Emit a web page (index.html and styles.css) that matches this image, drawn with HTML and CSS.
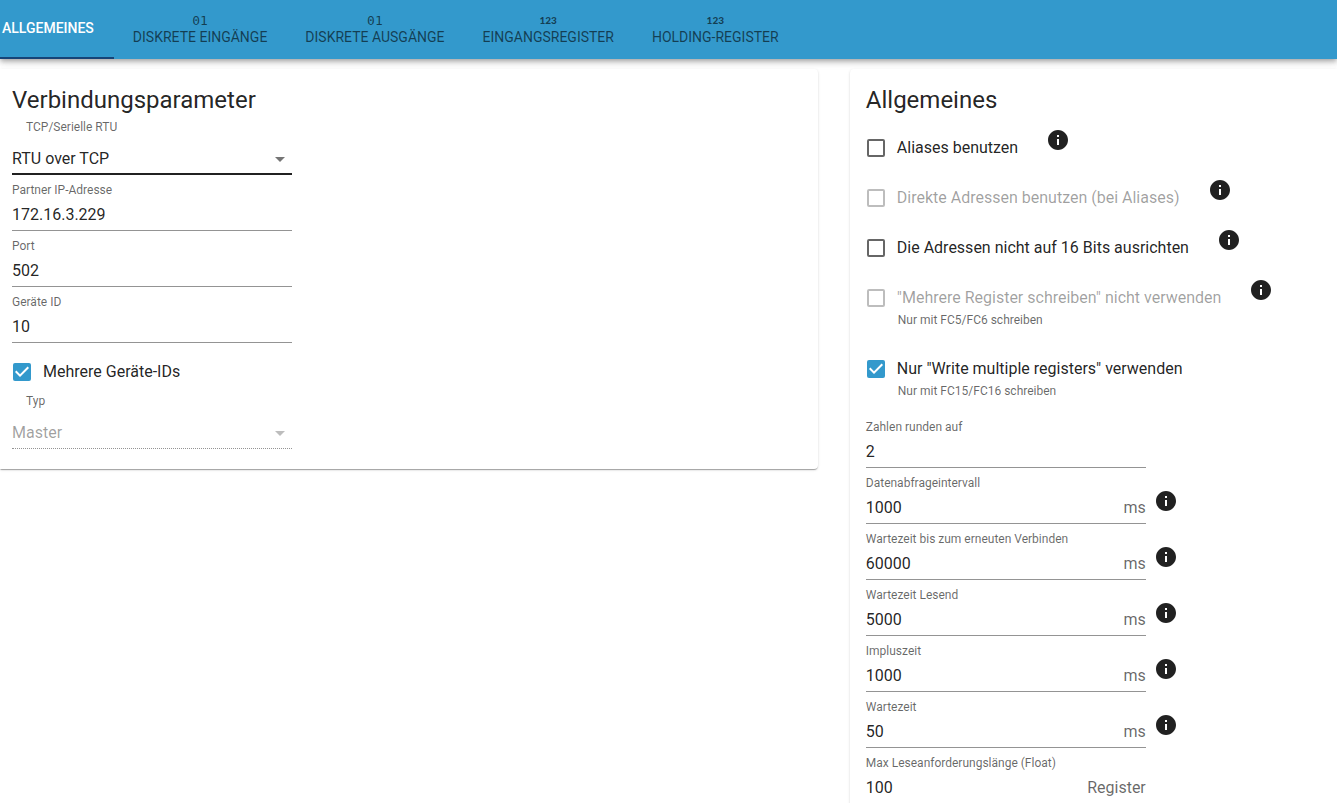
FILE: index.html
```html
<!DOCTYPE html>
<html lang="de">
<head>
    <meta charset="UTF-8">
    <meta name="viewport" content="width=device-width, initial-scale=1.0">
    <title>Modbus</title>
    <link rel="stylesheet" href="styles.css">
</head>
<body>
    <svg width="0" height="0" class="sprite" aria-hidden="true">
        <symbol id="info" viewBox="0 0 24 24">
            <path d="M12 2C6.48 2 2 6.48 2 12s4.48 10 10 10 10-4.48 10-10S17.52 2 12 2zm1 15h-2v-6h2v6zm0-8h-2V7h2v2z"></path>
        </symbol>
        <symbol id="arrow" viewBox="0 0 24 24">
            <path d="M7 10l5 5 5-5z"></path>
        </symbol>
    </svg>

    <nav class="tabs" role="tablist">
        <button class="tab active" type="button" role="tab" aria-selected="true">ALLGEMEINES</button>
        <button class="tab" type="button" role="tab"><span class="tab-icon binary">01</span>DISKRETE EINGÄNGE</button>
        <button class="tab" type="button" role="tab"><span class="tab-icon binary">01</span>DISKRETE AUSGÄNGE</button>
        <button class="tab" type="button" role="tab"><span class="tab-icon digits">123</span>EINGANGSREGISTER</button>
        <button class="tab" type="button" role="tab"><span class="tab-icon digits">123</span>HOLDING-REGISTER</button>
    </nav>

    <main class="content">
        <!-- Verbindungsparameter -->
        <section class="card connection">
            <h2 class="card-title">Verbindungsparameter</h2>
            <div class="select-field focused">
                <label for="type">TCP/Serielle RTU</label>
                <div class="select-box">
                    <select id="type">
                        <option>TCP</option>
                        <option selected>RTU over TCP</option>
                        <option>Seriell</option>
                    </select>
                    <svg class="icon"><use href="#arrow"></use></svg>
                </div>
            </div>
            <div class="field">
                <label for="ip">Partner IP-Adresse</label>
                <div class="input-box"><input id="ip" type="text" value="172.16.3.229"></div>
            </div>
            <div class="field">
                <label for="port">Port</label>
                <div class="input-box"><input id="port" type="text" value="502"></div>
            </div>
            <div class="field">
                <label for="device">Geräte ID</label>
                <div class="input-box"><input id="device" type="text" value="10"></div>
            </div>
            <div class="check-row">
                <div class="check-main">
                    <label class="check"><input type="checkbox" checked>Mehrere Geräte-IDs</label>
                </div>
            </div>
            <div class="select-field">
                <label for="role">Typ</label>
                <div class="select-box">
                    <select id="role" disabled>
                        <option>Master</option>
                        <option>Slave</option>
                    </select>
                    <svg class="icon"><use href="#arrow"></use></svg>
                </div>
            </div>
        </section>

        <!-- Allgemeines -->
        <section class="card general">
            <h2 class="card-title">Allgemeines</h2>
            <div class="options">
                <div class="check-row">
                    <div class="check-main">
                        <label class="check"><input type="checkbox">Aliases benutzen</label>
                        <svg class="icon info"><use href="#info"></use></svg>
                    </div>
                </div>
                <div class="check-row">
                    <div class="check-main">
                        <label class="check disabled"><input type="checkbox" disabled>Direkte Adressen benutzen (bei Aliases)</label>
                        <svg class="icon info"><use href="#info"></use></svg>
                    </div>
                </div>
                <div class="check-row">
                    <div class="check-main">
                        <label class="check"><input type="checkbox">Die Adressen nicht auf 16 Bits ausrichten</label>
                        <svg class="icon info"><use href="#info"></use></svg>
                    </div>
                </div>
                <div class="check-row hinted">
                    <div class="check-main">
                        <label class="check disabled"><input type="checkbox" disabled>"Mehrere Register schreiben" nicht verwenden</label>
                        <svg class="icon info"><use href="#info"></use></svg>
                    </div>
                    <p class="hint">Nur mit FC5/FC6 schreiben</p>
                </div>
                <div class="check-row hinted">
                    <div class="check-main">
                        <label class="check"><input type="checkbox" checked>Nur "Write multiple registers" verwenden</label>
                    </div>
                    <p class="hint">Nur mit FC15/FC16 schreiben</p>
                </div>
            </div>

            <div class="field-row">
                <div class="field">
                    <label for="round">Zahlen runden auf</label>
                    <div class="input-box"><input id="round" type="text" value="2"></div>
                </div>
            </div>
            <div class="field-row">
                <div class="field">
                    <label for="poll">Datenabfrageintervall</label>
                    <div class="input-box"><input id="poll" type="text" value="1000"><span class="unit">ms</span></div>
                </div>
                <svg class="icon info"><use href="#info"></use></svg>
            </div>
            <div class="field-row">
                <div class="field">
                    <label for="recon">Wartezeit bis zum erneuten Verbinden</label>
                    <div class="input-box"><input id="recon" type="text" value="60000"><span class="unit">ms</span></div>
                </div>
                <svg class="icon info"><use href="#info"></use></svg>
            </div>
            <div class="field-row">
                <div class="field">
                    <label for="timeout">Wartezeit Lesend</label>
                    <div class="input-box"><input id="timeout" type="text" value="5000"><span class="unit">ms</span></div>
                </div>
                <svg class="icon info"><use href="#info"></use></svg>
            </div>
            <div class="field-row">
                <div class="field">
                    <label for="pulse">Impluszeit</label>
                    <div class="input-box"><input id="pulse" type="text" value="1000"><span class="unit">ms</span></div>
                </div>
                <svg class="icon info"><use href="#info"></use></svg>
            </div>
            <div class="field-row">
                <div class="field">
                    <label for="wait">Wartezeit</label>
                    <div class="input-box"><input id="wait" type="text" value="50"><span class="unit">ms</span></div>
                </div>
                <svg class="icon info"><use href="#info"></use></svg>
            </div>
            <div class="field-row">
                <div class="field">
                    <label for="maxread">Max Leseanforderungslänge (Float)</label>
                    <div class="input-box"><input id="maxread" type="text" value="100"><span class="unit">Register</span></div>
                </div>
            </div>
        </section>
    </main>
</body>
</html>
```
FILE: styles.css
```css
:root {
    --primary: #3399cc;
    --indicator: #164477;
    --text: rgba(0, 0, 0, 0.87);
    --text-secondary: rgba(0, 0, 0, 0.6);
    --text-disabled: rgba(0, 0, 0, 0.38);
    --line: rgba(0, 0, 0, 0.42);
}

* {
    margin: 0;
    padding: 0;
    box-sizing: border-box;
}

body {
    background: #fff;
    color: var(--text);
    font-family: Roboto, "Liberation Sans", sans-serif;
    font-size: 16px;
    line-height: 24px;
}

input,
select,
button {
    font: inherit;
    color: inherit;
    background: none;
    border: none;
    outline: none;
}

.sprite {
    display: block;
}

.icon {
    width: 24px;
    height: 24px;
    flex: none;
    fill: currentColor;
}

/* Tabs */
.tabs {
    display: flex;
    height: 59px;
    background: var(--primary);
    box-shadow: 0 2px 4px -1px rgba(0, 0, 0, 0.2), 0 4px 5px 0 rgba(0, 0, 0, 0.14), 0 1px 10px 0 rgba(0, 0, 0, 0.12);
}

.tab {
    display: flex;
    flex-direction: column;
    align-items: center;
    justify-content: center;
    padding: 0 19px;
    border-bottom: 2px solid transparent;
    font-size: 14px;
    line-height: 17px;
    color: var(--text-secondary);
    white-space: nowrap;
    cursor: pointer;
}

.tab.active {
    padding: 0 20px 0 2px;
    border-color: var(--indicator);
    color: #fff;
    font-weight: 500;
}

.tab-icon {
    line-height: 17px;
}

.binary {
    font-family: "DejaVu Sans Mono", monospace;
    font-size: 13px;
}

.digits {
    font-family: Lato, sans-serif;
    font-size: 10px;
    font-weight: 900;
}

/* Cards */
.content {
    display: grid;
    grid-template-columns: 47fr 28fr;
    gap: 32px;
    align-items: start;
    padding-top: 10px;
}

.card {
    background: #fff;
    padding: 15px 12px 20px;
    box-shadow: 0 2px 1px -1px rgba(0, 0, 0, 0.2), 0 1px 1px 0 rgba(0, 0, 0, 0.14), 0 1px 3px 0 rgba(0, 0, 0, 0.12);
}

.connection {
    border-radius: 0 4px 4px 0;
}

.general {
    padding-left: 16px;
    border-radius: 4px 0 0 4px;
}

.card-title {
    margin-bottom: 1px;
    font-size: 24px;
    font-weight: 400;
    line-height: 32px;
}

/* Fields */
.field,
.select-field {
    width: 280px;
}

.field {
    padding-top: 7px;
}

.field label,
.select-field label {
    display: block;
    font-size: 12px;
    line-height: 16px;
    color: var(--text-secondary);
}

.input-box {
    display: flex;
    padding: 5px 0 3px;
    border-bottom: 1px solid var(--line);
}

.input-box input {
    flex: 1;
    min-width: 0;
    height: 24px;
}

.unit {
    color: var(--text-secondary);
}

.select-field {
    padding-top: 2px;
}

.select-field label {
    padding-left: 14px;
}

.select-box {
    display: grid;
    align-items: center;
    padding: 12px 0 3px;
    border-bottom: 1px dotted var(--line);
}

.focused .select-box {
    padding-bottom: 2px;
    border-bottom: 2px solid var(--text);
}

.select-box select,
.select-box .icon {
    grid-area: 1 / 1;
}

.select-box select {
    appearance: none;
    width: 100%;
    height: 24px;
}

.select-box select:disabled {
    color: var(--text-disabled);
    opacity: 1;
}

.select-box .icon {
    justify-self: end;
    color: rgba(0, 0, 0, 0.54);
    pointer-events: none;
}

.select-box select:disabled + .icon {
    color: rgba(0, 0, 0, 0.26);
}

.field-row {
    display: flex;
    align-items: flex-start;
    gap: 8px;
}

.field-row .info {
    margin-top: 21px;
}

/* Checkboxes */
.options {
    padding-top: 6px;
}

.check-row {
    padding: 13px 0;
}

.connection .check-row {
    padding: 17px 0 7px;
}

.hinted + .hinted {
    margin-top: 3px;
}

.check-main {
    display: flex;
    align-items: flex-start;
    gap: 28px;
}

.check-main .info {
    margin: -8px 0;
}

.check {
    display: flex;
    align-items: center;
    gap: 12px;
    padding-left: 1px;
}

.check.disabled {
    color: var(--text-disabled);
}

.check input {
    appearance: none;
    flex: none;
    width: 18px;
    height: 18px;
    border: 2px solid var(--text-secondary);
    border-radius: 2px;
}

.check input:disabled {
    border-color: rgba(0, 0, 0, 0.26);
}

.check input:checked {
    border: none;
    background: var(--primary) url("data:image/svg+xml,%3Csvg xmlns='http://www.w3.org/2000/svg' viewBox='3 3 18 18'%3E%3Cpath fill='white' d='M10 17l-5-5 1.41-1.41L10 14.17l7.59-7.59L19 8z'/%3E%3C/svg%3E");
}

.hint {
    margin-top: 2px;
    padding-left: 32px;
    font-size: 12px;
    line-height: 16px;
    color: var(--text-secondary);
}

@media (max-width: 900px) {
    .content {
        grid-template-columns: 1fr;
    }

    .tabs {
        overflow-x: auto;
    }
}
```
